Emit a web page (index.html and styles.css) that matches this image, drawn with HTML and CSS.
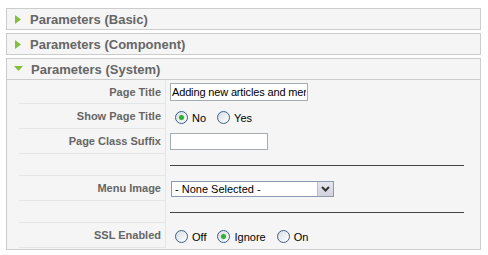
FILE: index.html
```html
<!DOCTYPE html>
<html lang="en">
<head>
  <meta charset="UTF-8">
  <title>Menu Item Parameters</title>
  <link rel="stylesheet" href="styles.css">
</head>
<body>

  <!-- Parameter sliders -->
  <div class="pane-sliders">

    <div class="panel">
      <h3 class="toggler">
        <svg class="arrow" width="6" height="9" viewBox="0 0 6 9"><polygon points="0,0 6,4.5 0,9" fill="#82c03c"/></svg>
        Parameters (Basic)
      </h3>
    </div>

    <div class="panel">
      <h3 class="toggler">
        <svg class="arrow" width="6" height="9" viewBox="0 0 6 9"><polygon points="0,0 6,4.5 0,9" fill="#82c03c"/></svg>
        Parameters (Component)
      </h3>
    </div>

    <div class="panel open">
      <h3 class="toggler">
        <svg class="arrow" width="9" height="6" viewBox="0 0 9 6"><polygon points="0,0 9,0 4.5,5" fill="#82c03c"/></svg>
        Parameters (System)
      </h3>

      <div class="paramlist">
        <div class="key">Page Title</div>
        <div class="value">
          <input class="text title" type="text" value="Adding new articles and menu items">
        </div>

        <div class="key">Show Page Title</div>
        <div class="value">
          <label class="radio"><input type="radio" name="show_page_title" checked> No</label>
          <label class="radio"><input type="radio" name="show_page_title"> Yes</label>
        </div>

        <div class="key">Page Class Suffix</div>
        <div class="value">
          <input class="text suffix" type="text" value="">
        </div>

        <div class="key"></div>
        <div class="value"><div class="spacer-line"></div></div>

        <div class="key">Menu Image</div>
        <div class="value">
          <div class="selectbox">
            <span class="selected">- None Selected -</span>
            <span class="drop">
              <svg width="9" height="6" viewBox="0 0 9 6"><polyline points="1,1 4.5,4.5 8,1" fill="none" stroke="#333" stroke-width="2"/></svg>
            </span>
          </div>
        </div>

        <div class="key"></div>
        <div class="value"><div class="spacer-line"></div></div>

        <div class="key">SSL Enabled</div>
        <div class="value">
          <label class="radio"><input type="radio" name="secure"> Off</label>
          <label class="radio"><input type="radio" name="secure" checked> Ignore</label>
          <label class="radio"><input type="radio" name="secure"> On</label>
        </div>
      </div>
    </div>

  </div>

</body>
</html>
```

FILE: styles.css
```css
body {
  margin: 0;
  padding: 0;
  background: #ffffff;
  font-family: "Liberation Sans", Arial, sans-serif;
}

/* Sliders */
.pane-sliders {
  width: 475px;
  margin: 8px 0 0 6px;
}

.panel {
  border: 1px solid #cccccc;
  background: #f5f5f5;
  margin-bottom: 3px;
}

.toggler {
  margin: 0;
  height: 20px;
  display: flex;
  align-items: center;
  gap: 9px;
  padding-left: 8px;
  font-size: 13px;
  font-weight: bold;
  color: #666666;
}

.panel.open .toggler {
  border-bottom: 1px solid #cccccc;
  padding-left: 7px;
  gap: 8px;
}

/* Parameter list */
.paramlist {
  display: grid;
  grid-template-columns: 147px 1fr;
  grid-template-rows: 24px 25px 25px 22px 25px 22px 25px;
  margin-left: 12px;
  padding-bottom: 1px;
  font-size: 11px;
}

.key {
  box-sizing: border-box;
  border-right: 1px solid #e5e5e5;
  border-bottom: 1px solid #e5e5e5;
  display: flex;
  align-items: center;
  justify-content: flex-end;
  padding-right: 4px;
  color: #666666;
  font-weight: bold;
}

.value {
  display: flex;
  align-items: center;
  padding-left: 4px;
  color: #000000;
}

.text {
  box-sizing: border-box;
  border: 1px solid #a5acb2;
  background: #ffffff;
  font-family: "Liberation Sans", Arial, sans-serif;
  font-size: 11px;
  letter-spacing: -0.15px;
  padding: 0 1px;
  margin: 0;
  color: #000000;
}

.text.title {
  width: 138px;
  height: 18px;
}

.text.suffix {
  width: 98px;
  height: 17px;
}

.spacer-line {
  width: 294px;
  border-top: 1px solid #444444;
}

/* Radios */
.radio {
  display: flex;
  align-items: center;
  margin-right: 6px;
  padding-top: 2px;
}

.radio input {
  appearance: none;
  -webkit-appearance: none;
  box-sizing: border-box;
  width: 13px;
  height: 13px;
  margin: 0 4px 0 5px;
  border: 1px solid #3d5f86;
  border-radius: 50%;
  background: linear-gradient(135deg, #d8dde4, #ffffff);
}

.radio input:checked {
  background: radial-gradient(circle, #2fb12f 0, #2fb12f 2px, #8fd88f 2.6px, transparent 3.2px),
    linear-gradient(135deg, #d8dde4, #ffffff);
}

/* Select */
.selectbox {
  box-sizing: border-box;
  width: 163px;
  height: 16px;
  border: 1px solid #8a9ab0;
  background: #ffffff;
  display: flex;
  align-items: center;
  justify-content: space-between;
  margin-left: 1px;
}

.selected {
  padding-left: 3px;
}

.drop {
  box-sizing: border-box;
  width: 16px;
  height: 14px;
  background: linear-gradient(#e6e6ee, #d2d3de);
  border-left: 1px solid #b9bccb;
  display: flex;
  align-items: center;
  justify-content: center;
}
```
